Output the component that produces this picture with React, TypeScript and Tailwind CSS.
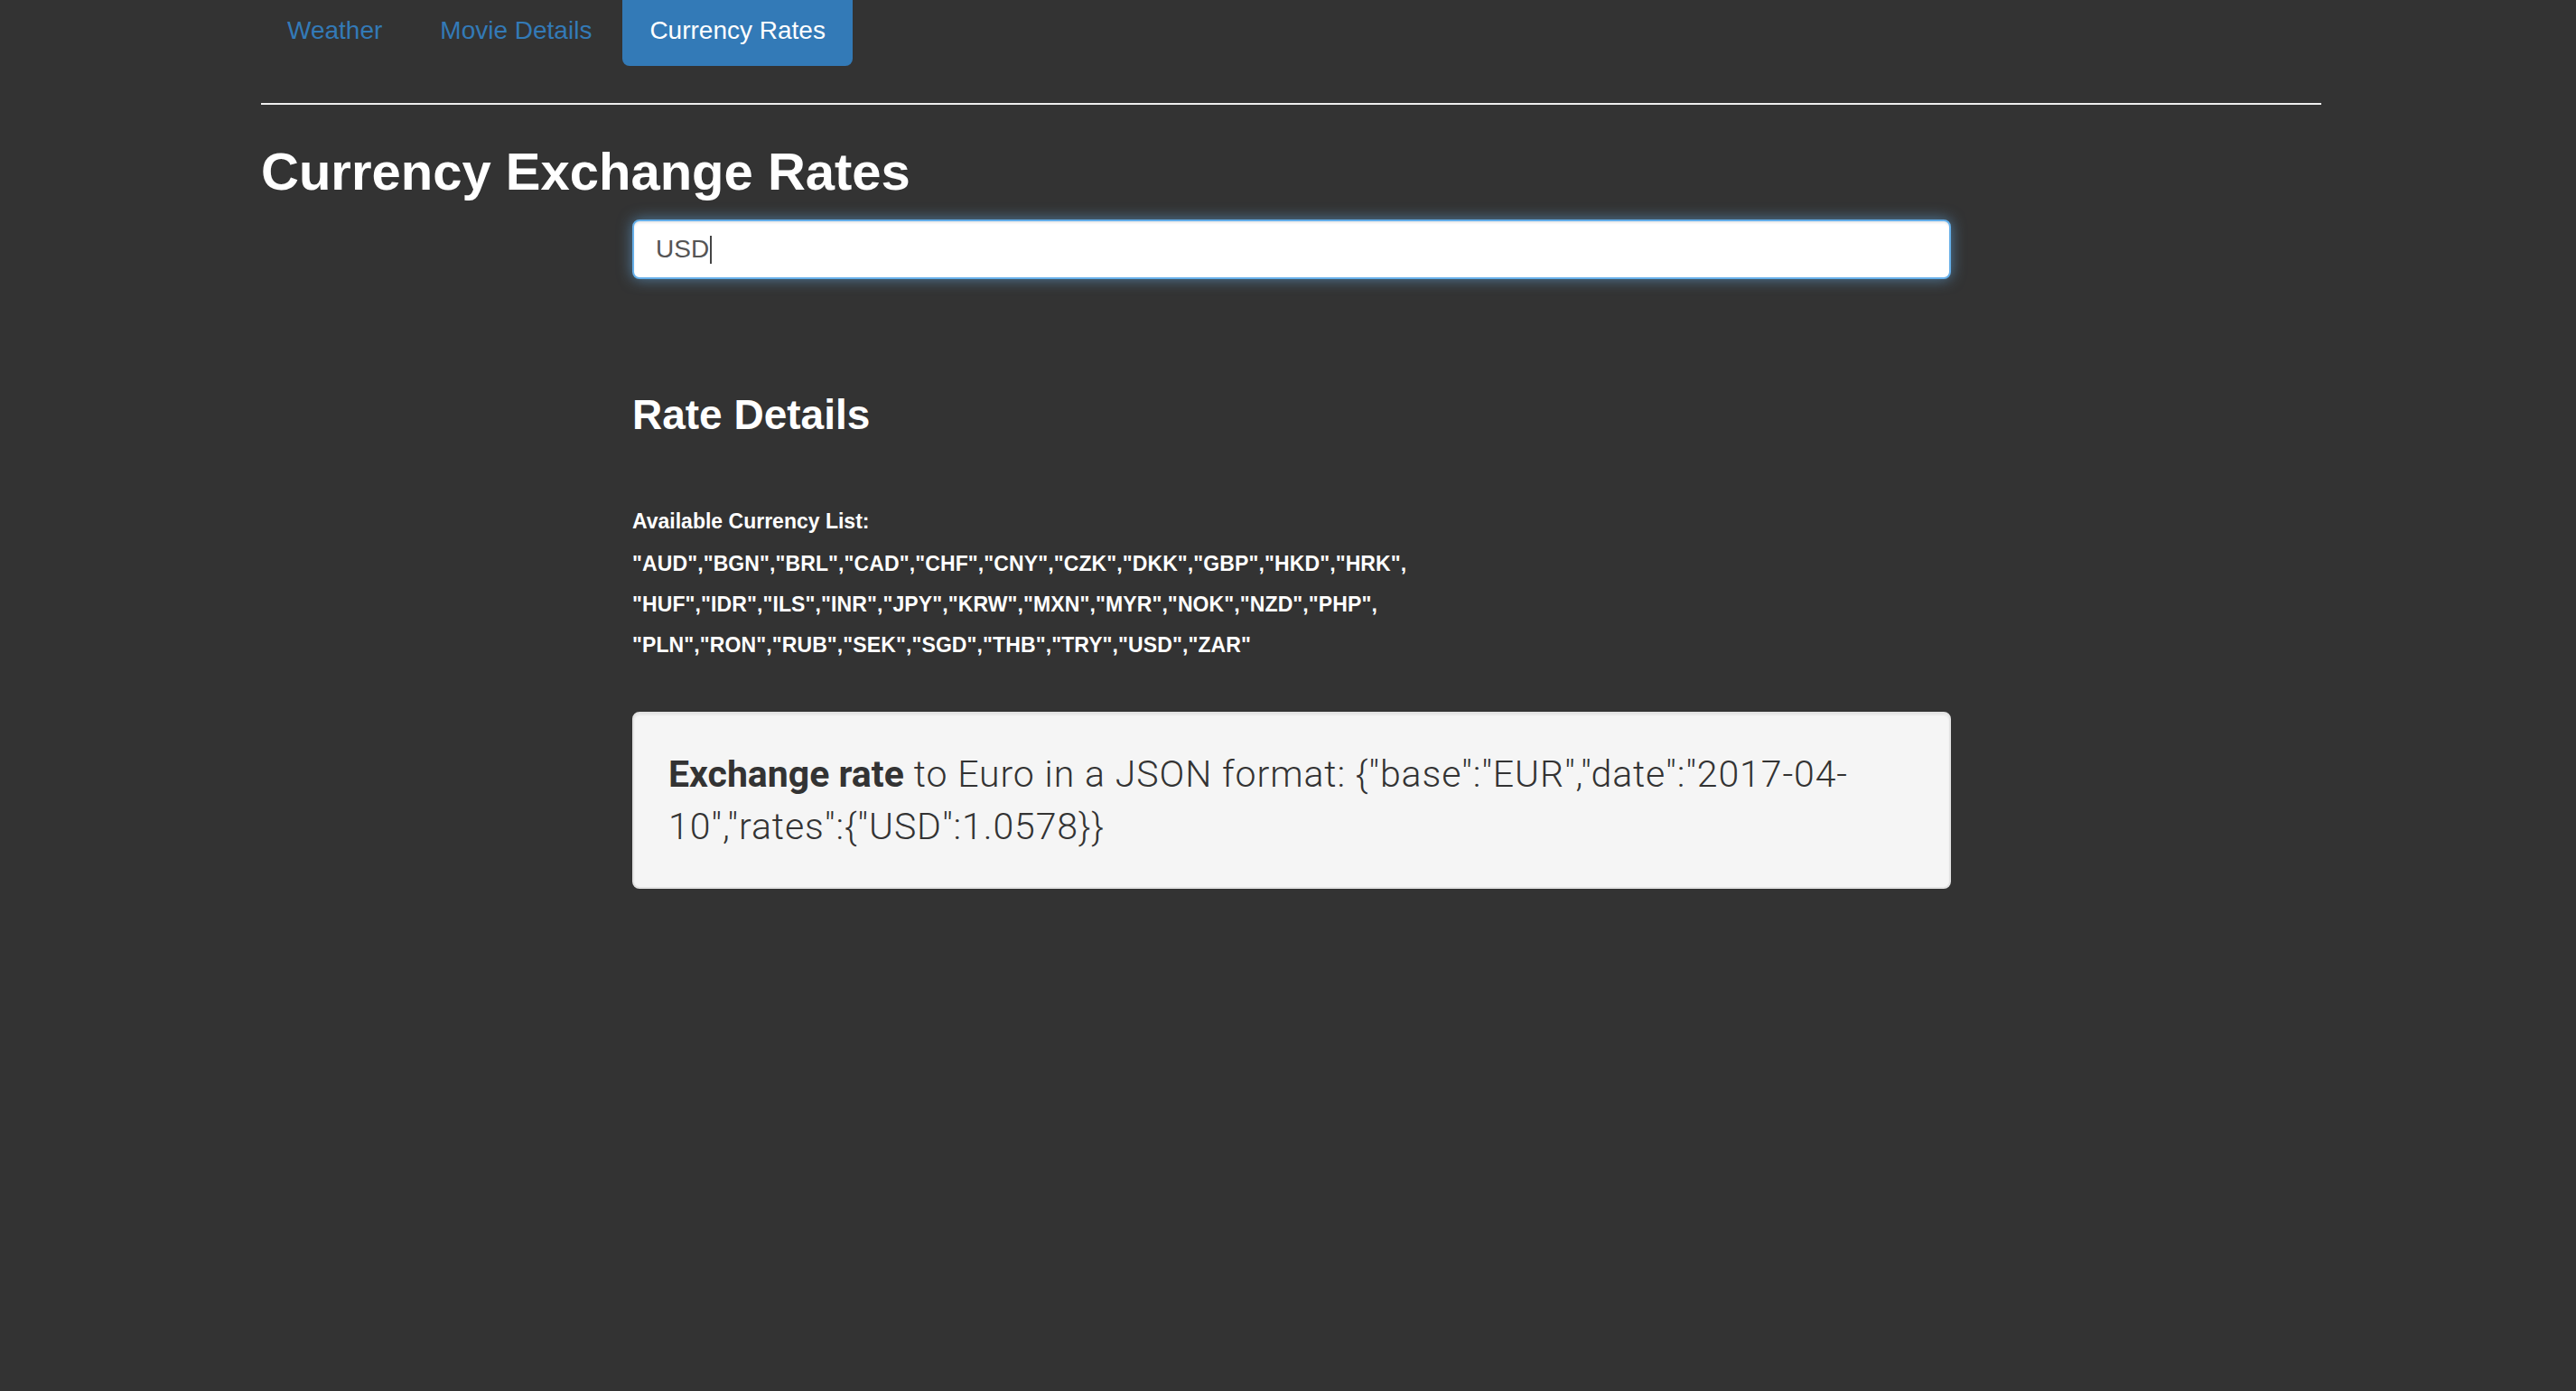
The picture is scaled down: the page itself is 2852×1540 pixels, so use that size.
import React from "react";

export default function App() {
  const lines = [
    '"AUD","BGN","BRL","CAD","CHF","CNY","CZK","DKK","GBP","HKD","HRK",',
    '"HUF","IDR","ILS","INR","JPY","KRW","MXN","MYR","NOK","NZD","PHP",',
    '"PLN","RON","RUB","SEK","SGD","THB","TRY","USD","ZAR"',
  ];
  return (
    <div
      className="min-h-screen w-full bg-[#333333] pl-[289px] overflow-hidden"
      style={{ fontFamily: '"Liberation Sans", Arial, sans-serif' }}
    >
      <div className="w-[2281px]">
        <ul className="flex gap-[4px] mt-[-7px] ml-[-1px]">
          <li>
            <a className="block px-[30px] pt-[21px] pb-[19px] text-[28px] leading-[40px] text-[#337ab7] rounded-[8px]">
              Weather
            </a>
          </li>
          <li>
            <a className="block px-[30px] pt-[21px] pb-[19px] text-[28px] leading-[40px] text-[#337ab7] rounded-[8px]">
              Movie Details
            </a>
          </li>
          <li>
            <a className="block px-[30px] pt-[21px] pb-[19px] text-[28px] leading-[40px] text-white bg-[#337ab7] rounded-[8px]">
              Currency Rates
            </a>
          </li>
        </ul>

        <div className="mt-[41px] h-[2px] bg-[#eeeeee]" />

        <h2 className="mt-[41px] text-[58px] leading-[66px] font-bold text-white">
          Currency Exchange Rates
        </h2>

        <div className="ml-[411px] w-[1460px]">
          <div className="mt-[20px] h-[66px] flex items-center rounded-[8px] border-2 border-[#66afe9] bg-white pl-[24px] shadow-[inset_0_2px_2px_rgba(0,0,0,0.075),0_0_16px_rgba(102,175,233,0.6)]">
            <span className="text-[28px] leading-[40px] text-[#555555]">USD</span>
            <span className="ml-[1px] inline-block w-[2px] h-[31px] bg-[#444444]" />
          </div>

          <h3 className="mt-[124px] text-[46px] leading-[53px] font-bold text-white">
            Rate Details
          </h3>

          <div className="mt-[69px] text-[23px] leading-[45px] font-bold text-white">
            Available Currency List:
          </div>
          <div className="mt-[2px] text-[23px] leading-[45px] font-bold text-white tracking-[0.1px]">
            {lines.map((l) => (
              <div key={l} className="whitespace-nowrap">
                {l}
              </div>
            ))}
          </div>

          <div
            className="mt-[51px] rounded-[8px] border-2 border-[#e3e3e3] bg-[#f5f5f5] px-[38px] py-[38px] shadow-[inset_0_2px_2px_rgba(0,0,0,0.05)] text-[41px] leading-[58px] tracking-[0.9px] text-[#333333] font-light"
            style={{ fontFamily: 'Roboto, "Liberation Sans", sans-serif' }}
          >
            <span className="font-bold tracking-[0px]">Exchange rate</span> to Euro in a JSON format:{" "}
            {'{"base":"EUR","date":"2017-04-'}
            <br />
            {'10","rates":{"USD":1.0578}}'}
          </div>
        </div>
      </div>
    </div>
  );
}
